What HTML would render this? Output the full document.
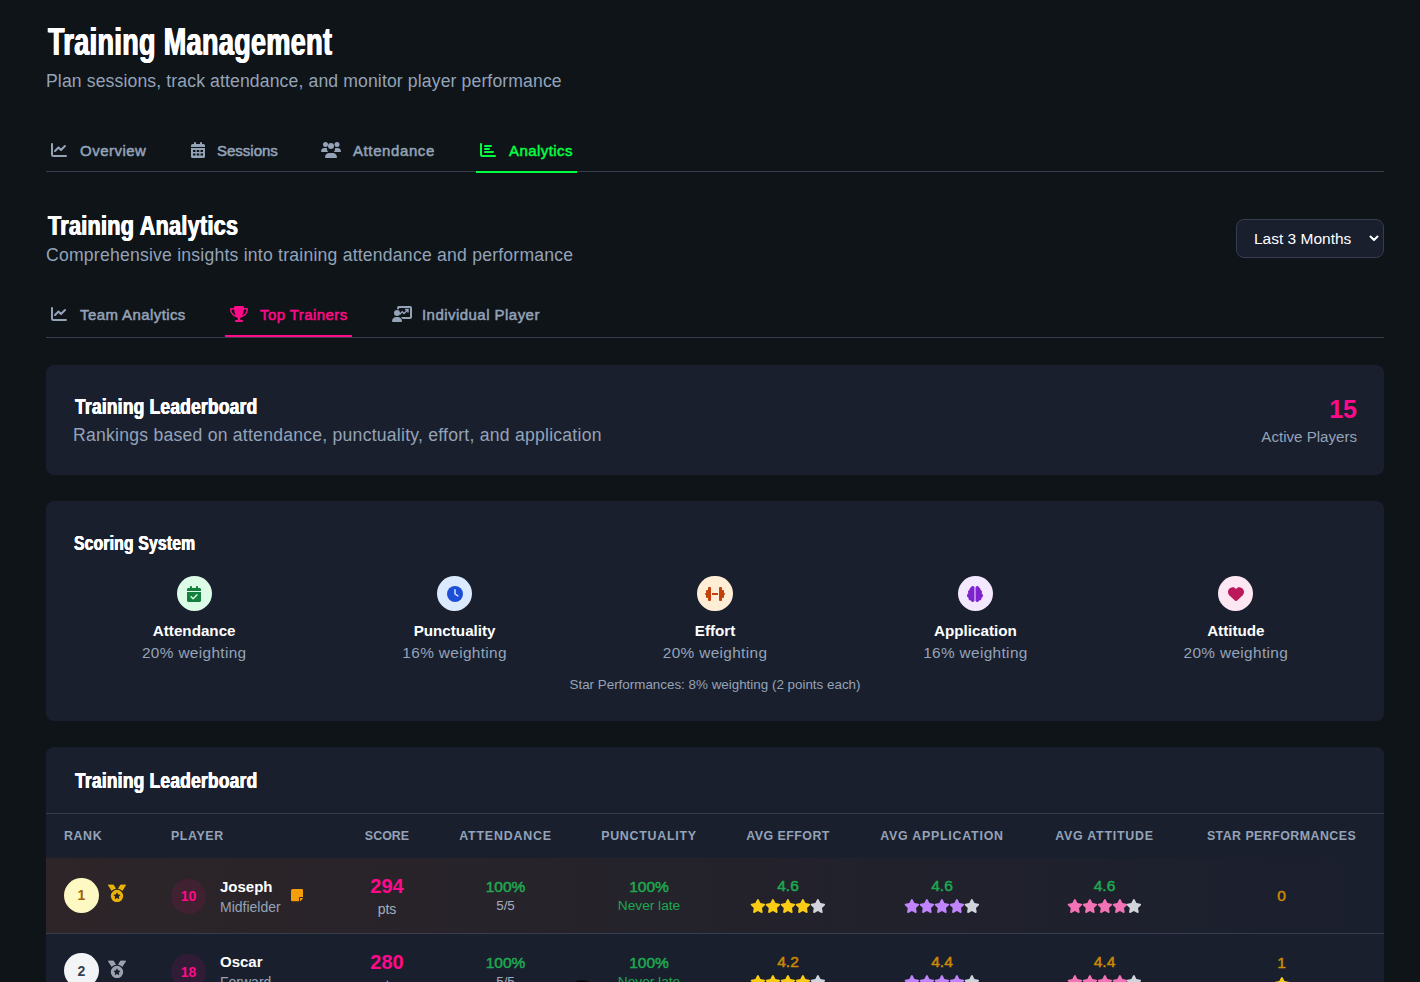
<!DOCTYPE html>
<html lang="en">
<head>
<meta charset="utf-8">
<title>Training Management</title>
<style>
*{box-sizing:border-box;margin:0;padding:0}
html,body{width:1420px;height:982px;overflow:hidden;background:#0f1419}
body{font-family:"Liberation Sans",sans-serif;color:#fff;position:relative}
.wrap{position:absolute;left:46px;top:0;width:1338px}
.cond{display:inline-block;white-space:nowrap;font-weight:700;transform-origin:0 50%;color:#fff}
.muted{color:#94a3b8;white-space:nowrap}
svg{display:block}

/* page header */
.page-head{position:absolute;left:0;top:0}
h1{position:absolute;left:0;top:20px;height:44px;line-height:44px;font-size:38.5px}
h1 .cond{transform:scaleX(.7);margin-left:2px;letter-spacing:.55px;text-shadow:.8px 0 0 #fff,-.8px 0 0 #fff}
.page-sub{position:absolute;left:0;top:71px;font-size:17.6px;line-height:20px;letter-spacing:.13px}

/* tabs */
.tabs{position:absolute;left:0;width:1338px;border-bottom:1px solid #363d4b}
.tabs.main{top:130px;height:42px}
.tabs.sub{top:294px;height:44px}
.tab{position:absolute;top:0;height:43px;display:flex;align-items:center;padding:0 4px;font-size:15px;font-weight:400;-webkit-text-stroke:.5px currentColor;color:#94a3b8;white-space:nowrap;border-bottom:2px solid transparent}
.tab svg{margin-right:13px;flex:none;position:relative;top:-.5px}
.tab span{position:relative;top:-.3px;letter-spacing:.45px}
.tab.green{color:#00ff41;border-bottom-color:#00ff41}
.tab.pink{color:#ff0a88;border-bottom-color:#ff0a88}

/* section header */
h2{position:absolute;left:0;top:208px;height:36px;line-height:36px;font-size:28px}
h2 .cond{transform:scaleX(.7694);margin-left:2px;letter-spacing:.4px;text-shadow:.6px 0 0 #fff,-.6px 0 0 #fff}
.sec-sub{position:absolute;left:0;top:245px;font-size:17.6px;line-height:20px;letter-spacing:.22px}
.select{position:absolute;left:1190px;top:219px;width:148px;height:39px;border:1px solid #363d4f;border-radius:8px;background:#1a1f2e;color:#fff;font-size:15.5px;line-height:38px;padding-left:17px;white-space:nowrap}
.select svg{position:absolute;right:4px;top:13.400px}

/* cards */
.card{position:absolute;left:0;width:1338px;background:#1a1f2e;border-radius:8px;overflow:hidden}
.card h3{position:absolute;left:27px;font-size:22px;line-height:28px;height:28px}
.card h3 .cond{transform:scaleX(.79);margin-left:1.500px;letter-spacing:.3px;text-shadow:.45px 0 0 #fff,-.45px 0 0 #fff}
#c2 h3 .cond{transform:scaleX(.762);margin-left:.8px}
#c1{top:365px;height:110px}
#c1 h3{top:28px}
#c1 .desc{position:absolute;left:27px;top:59.500px;font-size:17.6px;line-height:20px;letter-spacing:.24px}
#c1 .num{position:absolute;right:27px;top:29px;font-size:25px;line-height:30px;font-weight:700;color:#ff0a88}
#c1 .lbl{position:absolute;right:27px;top:61.500px;font-size:15.1px;line-height:20px}

/* scoring card */
#c2{top:501px;height:220px}
#c2 h3{top:28px;font-size:20.5px}
.grid{position:absolute;left:27px;top:75px;width:1284px;display:flex;gap:18px}
.metric{flex:1 1 0;display:flex;flex-direction:column;align-items:center;text-align:center}
.ico{width:35.2px;height:35.2px;border-radius:50%;display:flex;align-items:center;justify-content:center;margin-bottom:8.800px}
.metric b{font-size:15.2px;line-height:22px;font-weight:700;color:#fff;white-space:nowrap}
.metric span{font-size:15.4px;line-height:22px;color:#94a3b8;white-space:nowrap;letter-spacing:.34px}
.foot{position:absolute;left:0;width:1338px;top:174px;text-align:center;font-size:13.4px;line-height:20px;color:#94a3b8}

/* leaderboard table card */
#c3{top:747px;height:400px;border-radius:8px 8px 0 0}
#c3 h3{top:20px}
#c3 .rule{position:absolute;left:0;top:66px;width:1338px;height:1px;background:#343b4c}
table{position:absolute;left:0;top:67px;width:1338px;border-collapse:collapse;table-layout:fixed}
th{height:44px;padding:0 18px;font-size:12.4px;font-weight:700;letter-spacing:.6px;color:#94a3b8;text-align:center;white-space:nowrap;vertical-align:middle}
th.l{text-align:left}
td{height:75px;padding:2px 0 0;border-bottom:1px solid #363d4e;text-align:center;vertical-align:middle;white-space:nowrap}
tr.gold td{background:transparent}
tr.gold{background:linear-gradient(90deg,#2d2528 0%,#1a1f2e 100%)}
.rank{display:flex;align-items:center;padding-left:18px}
.badge{position:relative;top:-1px;width:35px;height:35px;border-radius:50%;display:flex;align-items:center;justify-content:center;font-size:14px;font-weight:700;margin-right:9px}
.b1{background:#fef9c3;color:#a16207}
.b2{background:#f3f4f6;color:#374151}
.player{display:flex;align-items:center;padding-left:18px;text-align:left}
.av{width:35.2px;height:35.2px;border-radius:50%;background:rgba(255,10,136,.1);color:#ff0a88;display:flex;align-items:center;justify-content:center;font-size:14px;font-weight:700;margin-right:13.800px;flex:none}
.nm{font-size:15px;line-height:19px;font-weight:700;color:#fff;position:relative;top:-1px}
.pos{font-size:14px;line-height:18px;color:#94a3b8;position:relative;top:1px}
.note{margin-left:10.300px;position:relative;top:-1px}
.score{font-size:20px;line-height:26px;position:relative;top:1px;font-weight:700;color:#ff0a88}
.pts{font-size:14px;line-height:22px;color:#a3adbd}
.v{font-size:15.5px;line-height:20px;font-weight:400;-webkit-text-stroke:.5px currentColor}
td.avg{padding:0 0 1px}
.g{color:#1ea950}
.y{color:#ca8a04}
.s{font-size:13.4px;line-height:18px;color:#a3adbd}
.s.g{color:#1ea950;font-size:13.7px}
.stars{display:flex;justify-content:center;margin-top:3px}
.stars svg{width:15.75px;height:14px;flex:none;margin:0 -.45px}
.fy{fill:#facc15}.fp{fill:#c084fc}.fk{fill:#f472b6}.fe{fill:#d1d5db}
.dot{position:absolute;left:521px;top:979.500px;width:30px;height:30px;border-radius:50%;background:#0b0b0c}
</style>
</head>
<body>
<div class="wrap">

  <h1><span class="cond">Training Management</span></h1>
  <p class="page-sub muted">Plan sessions, track attendance, and monitor player performance</p>

  <div class="tabs main">
    <div class="tab" style="left:1px">
      <svg width="16" height="16" viewBox="0 0 512 512" fill="none" stroke="currentColor" stroke-width="64" stroke-linecap="round" stroke-linejoin="round"><path d="M32 64V400a48 48 0 0 0 48 48H480"/><path d="M128 288 240 176l80 80 128-128"/></svg>
      <span style="letter-spacing:.49px">Overview</span>
    </div>
    <div class="tab" style="left:140px">
      <svg width="14" height="16" viewBox="0 0 448 512" fill="currentColor" fill-rule="evenodd" style="margin-left:1px;margin-right:12px"><path d="M96 32a32 32 0 0 1 64 0v32h128V32a32 32 0 0 1 64 0v32h48a48 48 0 0 1 48 48v48H0v-48a48 48 0 0 1 48-48h48zM0 192h448v272a48 48 0 0 1-48 48H48a48 48 0 0 1-48-48zm64 64v64h80v-64zm120 0v64h80v-64zm120 0v64h80v-64zM64 368v64h80v-64zm120 0v64h80v-64zm120 0v64h80v-64z"/></svg>
      <span style="letter-spacing:0">Sessions</span>
    </div>
    <div class="tab" style="left:271px">
      <svg width="20" height="16" viewBox="0 0 640 512" fill="currentColor"><circle cx="144" cy="80" r="80"/><circle cx="512" cy="80" r="80"/><circle cx="320" cy="128" r="96"/><path d="M0 298.700C0 239.800 47.800 192 106.700 192h42.600c15.900 0 31 3.500 44.600 9.700-1.300 7.200-1.900 14.700-1.900 22.300 0 38.200 16.800 72.500 43.300 96H21.300C9.600 320 0 310.400 0 298.700zM405.300 320h-.7c26.600-23.500 43.300-57.800 43.300-96 0-7.600-.7-15-1.900-22.300 13.600-6.300 28.700-9.700 44.600-9.700h42.700C592.200 192 640 239.800 640 298.700c0 11.800-9.600 21.300-21.300 21.300zM128 485.300C128 411.700 187.700 352 261.300 352h117.400C452.300 352 512 411.700 512 485.300c0 14.700-11.900 26.700-26.700 26.700H154.700c-14.700 0-26.700-11.900-26.700-26.700z"/></svg>
      <span style="letter-spacing:.6px;margin-left:-1px">Attendance</span>
    </div>
    <div class="tab green" style="left:430px">
      <svg width="16" height="16" viewBox="0 0 512 512" fill="none" stroke="currentColor" stroke-width="64" stroke-linecap="round" stroke-linejoin="round"><path d="M32 64V400a48 48 0 0 0 48 48H480"/><path d="M160 128H352M160 224H288M160 320H416"/></svg>
      <span style="letter-spacing:.43px">Analytics</span>
    </div>
  </div>

  <h2><span class="cond">Training Analytics</span></h2>
  <p class="sec-sub muted">Comprehensive insights into training attendance and performance</p>
  <div class="select">Last 3 Months
    <svg width="10" height="10" viewBox="0 0 10 10" fill="none" stroke="#fff" stroke-width="2" stroke-linecap="round" stroke-linejoin="round"><path d="M1.500 3.500 5 7l3.500-3.500"/></svg>
  </div>

  <div class="tabs sub">
    <div class="tab" style="left:1px">
      <svg width="16" height="16" viewBox="0 0 512 512" fill="none" stroke="currentColor" stroke-width="64" stroke-linecap="round" stroke-linejoin="round"><path d="M32 64V400a48 48 0 0 0 48 48H480"/><path d="M128 288 240 176l80 80 128-128"/></svg>
      <span style="letter-spacing:.41px">Team Analytics</span>
    </div>
    <div class="tab pink" style="left:179px">
      <svg width="18" height="16" viewBox="0 0 576 512" fill="currentColor" style="margin-left:.9px;margin-right:12.100px"><path d="M400 0H176c-26.500 0-48.100 21.800-47.100 48.200.2 5.300.4 10.600.7 15.800H24C10.700 64 0 74.700 0 88c0 92.600 33.500 157 78.500 200.700 44.300 43.100 98.300 64.800 138.100 75.800 23.400 6.500 39.400 26 39.400 45.600 0 20.900-17 37.900-37.900 37.900H192c-17.700 0-32 14.300-32 32s14.300 32 32 32H384c17.700 0 32-14.300 32-32s-14.300-32-32-32H357.900C337 448 320 431 320 410.100c0-19.600 15.900-39.200 39.400-45.600 39.900-11 93.900-32.700 138.200-75.800C542.500 245 576 180.600 576 88c0-13.300-10.700-24-24-24H446.400c.3-5.200.5-10.400.7-15.800C448.100 21.800 426.500 0 400 0zM48.900 112h84.400c9.100 90.100 29.200 150.300 51.900 190.600-24.900-11-50.800-26.500-73.200-48.300-32-31.100-58-76-63-142.300zM464.100 254.300c-22.400 21.800-48.300 37.300-73.200 48.300 22.700-40.300 42.800-100.500 51.900-190.600h84.400c-5.100 66.300-31.100 111.200-63 142.300z"/></svg>
      <span style="letter-spacing:.42px">Top Trainers</span>
    </div>
    <div class="tab" style="left:341px">
      <svg width="20" height="16" viewBox="0 0 640 512" fill="currentColor" fill-rule="evenodd" style="margin-left:.6px;margin-right:12.400px"><path d="M160 64a64 64 0 0 1 64-64h352a64 64 0 0 1 64 64v288a64 64 0 0 1-64 64H336.800c-11.800-25.500-29.900-47.500-52.400-64H576V64H224v49c-18.800-10.900-40.700-17-64-17zm224 208-56-56-72 72-34-34 106-106 56 56 72-72h-40v-48h120v120h-48v-40z"/><circle cx="160" cy="224" r="96"/><path d="M133.300 352h53.400C260.300 352 320 411.700 320 485.300c0 14.700-11.900 26.700-26.700 26.700H26.700C11.900 512 0 500.100 0 485.300 0 411.700 59.700 352 133.300 352z"/></svg>
      <span style="letter-spacing:.46px;margin-left:-2px">Individual Player</span>
    </div>
  </div>

  <div class="card" id="c1">
    <h3><span class="cond">Training Leaderboard</span></h3>
    <p class="desc muted">Rankings based on attendance, punctuality, effort, and application</p>
    <div class="num">15</div>
    <div class="lbl muted">Active Players</div>
  </div>

  <div class="card" id="c2">
    <h3><span class="cond">Scoring System</span></h3>
    <div class="grid">
      <div class="metric">
        <div class="ico" style="background:#dcfce7;color:#15803d">
          <svg width="14" height="16" viewBox="0 0 448 512" fill="currentColor"><path d="M128 0c17.700 0 32 14.300 32 32v32h128V32c0-17.700 14.300-32 32-32s32 14.300 32 32v32h48c26.500 0 48 21.500 48 48v48H0v-48c0-26.500 21.500-48 48-48h48V32c0-17.700 14.300-32 32-32zM0 192h448v272c0 26.500-21.500 48-48 48H48c-26.500 0-48-21.500-48-48z"/><path d="M132 342l64 64 124-124" fill="none" stroke="#dcfce7" stroke-width="44" stroke-linecap="round" stroke-linejoin="round"/></svg>
        </div>
        <b>Attendance</b><span>20% weighting</span>
      </div>
      <div class="metric">
        <div class="ico" style="background:#dbeafe;color:#1d4ed8">
          <svg width="16" height="16" viewBox="0 0 512 512"><circle cx="256" cy="256" r="256" fill="currentColor"/><path d="M256 120v136l92 62" fill="none" stroke="#dbeafe" stroke-width="46" stroke-linecap="round" stroke-linejoin="round"/></svg>
        </div>
        <b>Punctuality</b><span>16% weighting</span>
      </div>
      <div class="metric">
        <div class="ico" style="background:#ffedd5;color:#c2410c">
          <svg width="20" height="16" viewBox="0 0 640 512" fill="currentColor"><rect x="96" y="32" width="96" height="448" rx="32"/><rect x="32" y="128" width="80" height="256" rx="32"/><rect x="0" y="224" width="64" height="64" rx="32"/><rect x="448" y="32" width="96" height="448" rx="32"/><rect x="528" y="128" width="80" height="256" rx="32"/><rect x="576" y="224" width="64" height="64" rx="32"/><rect x="224" y="224" width="192" height="64"/></svg>
        </div>
        <b>Effort</b><span>20% weighting</span>
      </div>
      <div class="metric">
        <div class="ico" style="background:#f3e8ff;color:#7e22ce">
          <svg width="16" height="16" viewBox="0 0 512 512" fill="currentColor"><path d="M184 0c30.900 0 56 25.100 56 56V456c0 30.900-25.100 56-56 56-28.900 0-52.700-21.900-55.700-50.100-5.200 1.400-10.700 2.100-16.300 2.100-35.300 0-64-28.700-64-64 0-7.400 1.300-14.600 3.600-21.200C21.400 367.400 0 338.200 0 304c0-31.900 18.700-59.500 45.800-72.300C37.100 220.800 32 207 32 192c0-30.700 21.600-56.300 50.400-62.600C80.800 123.900 80 118 80 112c0-29.900 20.600-55.100 48.300-62.100C131.300 21.900 155.100 0 184 0z"/><path d="M328 0c-30.900 0-56 25.100-56 56V456c0 30.900 25.100 56 56 56 28.900 0 52.600-21.900 55.700-50.100 5.200 1.400 10.700 2.100 16.300 2.100 35.300 0 64-28.700 64-64 0-7.400-1.300-14.600-3.600-21.200 30.200-11.400 51.600-40.600 51.600-74.800 0-31.900-18.700-59.500-45.800-72.300C474.900 220.800 480 207 480 192c0-30.700-21.600-56.300-50.400-62.600 1.600-5.500 2.400-11.400 2.400-17.400 0-29.900-20.600-55.100-48.300-62.100C380.600 21.900 356.900 0 328 0z"/></svg>
        </div>
        <b>Application</b><span>16% weighting</span>
      </div>
      <div class="metric">
        <div class="ico" style="background:#fce7f3;color:#be185d">
          <svg width="16" height="16" viewBox="0 0 512 512" fill="currentColor"><path d="M47.600 300.400 228.300 469.100c7.500 7 17.400 10.900 27.700 10.900s20.200-3.900 27.700-10.900L464.400 300.400c30.400-28.300 47.600-68 47.600-109.500v-5.800c0-69.900-50.500-129.500-119.400-141C347 36.500 300.600 51.400 268 84L256 96 244 84c-32.600-32.600-79-47.500-124.600-39.900C50.500 55.600 0 115.200 0 185.100v5.800c0 41.500 17.200 81.200 47.600 109.500z"/></svg>
        </div>
        <b>Attitude</b><span>20% weighting</span>
      </div>
    </div>
    <p class="foot">Star Performances: 8% weighting (2 points each)</p>
  </div>

  <div class="card" id="c3">
    <svg width="0" height="0" style="position:absolute">
      <defs>
        <symbol id="i-star" viewBox="0 0 576 512"><path d="M316.900 18C311.600 7 300.400 0 288.100 0s-23.400 7-28.800 18L195 150.300 51.400 171.500c-12 1.800-22 10.200-25.700 21.700s-.7 24.200 7.900 32.700L137.800 329 113.200 474.700c-2 12 3 24.200 12.900 31.300s23 8 33.800 2.300l128.300-68.500 128.300 68.500c10.800 5.700 23.900 4.900 33.800-2.300s14.900-19.300 12.900-31.300L438.500 329 542.700 225.900c8.600-8.500 11.700-21.200 7.900-32.700s-13.700-19.900-25.700-21.700L381.200 150.300 316.900 18z"/></symbol>
        <symbol id="i-medal" viewBox="0 0 512 512"><path fill="currentColor" d="M4.100 38.200C1.400 34.200 0 29.400 0 24.600 0 11 11 0 24.600 0H133.900c11.200 0 21.700 5.900 27.400 15.500l68.500 114.100c-48.200 6.100-91.300 28.600-123.400 61.900L4.100 38.200zm503.700 0L405.600 191.500c-32.100-33.300-75.200-55.800-123.400-61.900L350.700 15.500C356.500 5.900 366.900 0 378.100 0H487.400C501 0 512 11 512 24.600c0 4.800-1.400 9.600-4.100 13.600zM80 336a176 176 0 1 1 352 0A176 176 0 1 1 80 336zm184.400-94.900c-3.400-7-13.300-7-16.800 0l-22.400 45.400c-1.400 2.800-4 4.700-7 5.100L168 298.900c-7.700 1.100-10.700 10.500-5.200 16l36.300 35.400c2.200 2.200 3.200 5.200 2.700 8.300l-8.600 49.900c-1.300 7.600 6.700 13.500 13.600 9.900l44.800-23.600c2.700-1.400 6-1.400 8.700 0l44.800 23.600c6.900 3.600 14.900-2.200 13.600-9.900l-8.600-49.900c-.5-3 .5-6.100 2.700-8.300l36.300-35.400c5.600-5.400 2.500-14.800-5.200-16l-50.100-7.300c-3-.4-5.700-2.400-7-5.100l-22.400-45.400z"/></symbol>
        <symbol id="i-note" viewBox="0 0 448 448"><path fill="#f59e0b" d="M64 0C28.700 0 0 28.700 0 64V384c0 35.300 28.700 64 64 64H288V336c0-26.500 21.500-48 48-48H448V64c0-35.300-28.700-64-64-64H64zM448 320H336c-8.800 0-16 7.200-16 16V448l128-128z"/></symbol>
      </defs>
    </svg>
    <h3><span class="cond">Training Leaderboard</span></h3>
    <div class="rule"></div>
    <table>
      <colgroup><col style="width:107px"><col style="width:186px"><col style="width:96px"><col style="width:141px"><col style="width:146px"><col style="width:132px"><col style="width:176px"><col style="width:149px"><col style="width:205px"></colgroup>
      <thead>
        <tr><th class="l">RANK</th><th class="l">PLAYER</th><th style="letter-spacing:.04px">SCORE</th><th style="letter-spacing:.8px">ATTENDANCE</th><th style="letter-spacing:.75px">PUNCTUALITY</th><th style="letter-spacing:.48px">AVG EFFORT</th><th style="letter-spacing:.78px">AVG APPLICATION</th><th style="letter-spacing:.78px">AVG ATTITUDE</th><th style="letter-spacing:.45px">STAR PERFORMANCES</th></tr>
      </thead>
      <tbody>
        <tr class="gold">
          <td><div class="rank"><span class="badge b1">1</span><svg width="18" height="18" viewBox="0 0 512 512" style="transform:translateY(-2.800px);color:#eab308"><use href="#i-medal"/></svg></div></td>
          <td><div class="player"><span class="av">10</span><div><div class="nm">Joseph</div><div class="pos">Midfielder</div></div><svg class="note" width="12.500" height="12.500" viewBox="0 0 448 448"><use href="#i-note"/></svg></div></td>
          <td><div class="score">294</div><div class="pts">pts</div></td>
          <td><div class="v g">100%</div><div class="s">5/5</div></td>
          <td><div class="v g">100%</div><div class="s g">Never late</div></td>
          <td class="avg"><div class="v g">4.6</div><div class="stars"><svg viewBox="0 0 576 512" class="fy"><use href="#i-star"/></svg><svg viewBox="0 0 576 512" class="fy"><use href="#i-star"/></svg><svg viewBox="0 0 576 512" class="fy"><use href="#i-star"/></svg><svg viewBox="0 0 576 512" class="fy"><use href="#i-star"/></svg><svg viewBox="0 0 576 512" class="fe"><use href="#i-star"/></svg></div></td>
          <td class="avg"><div class="v g">4.6</div><div class="stars"><svg viewBox="0 0 576 512" class="fp"><use href="#i-star"/></svg><svg viewBox="0 0 576 512" class="fp"><use href="#i-star"/></svg><svg viewBox="0 0 576 512" class="fp"><use href="#i-star"/></svg><svg viewBox="0 0 576 512" class="fp"><use href="#i-star"/></svg><svg viewBox="0 0 576 512" class="fe"><use href="#i-star"/></svg></div></td>
          <td class="avg"><div class="v g">4.6</div><div class="stars"><svg viewBox="0 0 576 512" class="fk"><use href="#i-star"/></svg><svg viewBox="0 0 576 512" class="fk"><use href="#i-star"/></svg><svg viewBox="0 0 576 512" class="fk"><use href="#i-star"/></svg><svg viewBox="0 0 576 512" class="fk"><use href="#i-star"/></svg><svg viewBox="0 0 576 512" class="fe"><use href="#i-star"/></svg></div></td>
          <td><div class="v y">0</div></td>
        </tr>
        <tr class="">
          <td><div class="rank"><span class="badge b2">2</span><svg width="18" height="18" viewBox="0 0 512 512" style="transform:translateY(-2.800px);color:#9ca3af"><use href="#i-medal"/></svg></div></td>
          <td><div class="player"><span class="av">18</span><div><div class="nm">Oscar</div><div class="pos">Forward</div></div></div></td>
          <td><div class="score">280</div><div class="pts">pts</div></td>
          <td><div class="v g">100%</div><div class="s">5/5</div></td>
          <td><div class="v g">100%</div><div class="s g">Never late</div></td>
          <td class="avg"><div class="v y">4.2</div><div class="stars"><svg viewBox="0 0 576 512" class="fy"><use href="#i-star"/></svg><svg viewBox="0 0 576 512" class="fy"><use href="#i-star"/></svg><svg viewBox="0 0 576 512" class="fy"><use href="#i-star"/></svg><svg viewBox="0 0 576 512" class="fy"><use href="#i-star"/></svg><svg viewBox="0 0 576 512" class="fe"><use href="#i-star"/></svg></div></td>
          <td class="avg"><div class="v y">4.4</div><div class="stars"><svg viewBox="0 0 576 512" class="fp"><use href="#i-star"/></svg><svg viewBox="0 0 576 512" class="fp"><use href="#i-star"/></svg><svg viewBox="0 0 576 512" class="fp"><use href="#i-star"/></svg><svg viewBox="0 0 576 512" class="fp"><use href="#i-star"/></svg><svg viewBox="0 0 576 512" class="fe"><use href="#i-star"/></svg></div></td>
          <td class="avg"><div class="v y">4.4</div><div class="stars"><svg viewBox="0 0 576 512" class="fk"><use href="#i-star"/></svg><svg viewBox="0 0 576 512" class="fk"><use href="#i-star"/></svg><svg viewBox="0 0 576 512" class="fk"><use href="#i-star"/></svg><svg viewBox="0 0 576 512" class="fk"><use href="#i-star"/></svg><svg viewBox="0 0 576 512" class="fe"><use href="#i-star"/></svg></div></td>
          <td><div class="v y">1</div><div class="stars" style="margin-top:4px"><svg viewBox="0 0 576 512" class="fy"><use href="#i-star"/></svg></div></td>
        </tr>
      </tbody>
    </table>
  </div>
  <div class="dot"></div>

</div>
</body>
</html>
